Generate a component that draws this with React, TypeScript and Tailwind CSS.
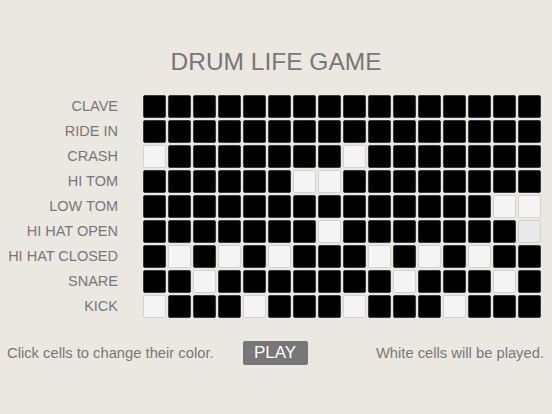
import { useState } from "react";

const LABELS = [
  "CLAVE",
  "RIDE IN",
  "CRASH",
  "HI TOM",
  "LOW TOM",
  "HI HAT OPEN",
  "HI HAT CLOSED",
  "SNARE",
  "KICK",
];

// 1 = white (will be played), 2 = white with hover tint
const INITIAL: number[][] = [
  [0, 0, 0, 0, 0, 0, 0, 0, 0, 0, 0, 0, 0, 0, 0, 0],
  [0, 0, 0, 0, 0, 0, 0, 0, 0, 0, 0, 0, 0, 0, 0, 0],
  [1, 0, 0, 0, 0, 0, 0, 0, 1, 0, 0, 0, 0, 0, 0, 0],
  [0, 0, 0, 0, 0, 0, 1, 1, 0, 0, 0, 0, 0, 0, 0, 0],
  [0, 0, 0, 0, 0, 0, 0, 0, 0, 0, 0, 0, 0, 0, 1, 1],
  [0, 0, 0, 0, 0, 0, 0, 1, 0, 0, 0, 0, 0, 0, 0, 2],
  [0, 1, 0, 1, 0, 1, 0, 0, 0, 1, 0, 1, 0, 1, 0, 0],
  [0, 0, 1, 0, 0, 0, 0, 0, 0, 0, 1, 0, 0, 0, 1, 0],
  [1, 0, 0, 0, 1, 0, 0, 0, 1, 0, 0, 0, 1, 0, 0, 0],
];

const App = () => {
  const [cells, setCells] = useState(INITIAL);

  const toggle = (r: number, c: number) =>
    setCells((prev) =>
      prev.map((row, ri) =>
        ri === r ? row.map((v, ci) => (ci === c ? (v ? 0 : 1) : v)) : row
      )
    );

  return (
    <div
      className="w-[552px] h-[414px] bg-[#ebe8e1] text-[#777777] flex flex-col overflow-hidden"
      style={{ fontFamily: '"Liberation Sans", Arial, sans-serif' }}
    >
      <h1 className="mt-[46px] text-center text-[24.5px] leading-[32px] font-normal">
        DRUM LIFE GAME
      </h1>

      <div className="mt-[17px] flex flex-col gap-[2px]">
        {LABELS.map((label, r) => (
          <div key={label} className="flex items-center h-[23px]">
            <span className="w-[118px] text-right text-[14.5px] leading-[23px] whitespace-nowrap">
              {label}
            </span>
            <div className="ml-[25px] flex gap-[2px]">
              {cells[r].map((v, c) => (
                <Cell key={c} value={v} onClick={() => toggle(r, c)} />
              ))}
            </div>
          </div>
        ))}
      </div>

      <div className="mt-[23px] flex items-center pl-[7px] pr-[8px] text-[14.75px]">
        <span>Click cells to change their color.</span>
        <button className="ml-[29px] w-[65px] h-[24px] bg-[#777777] text-white text-[17px] leading-[24px] rounded-[2px]">
          PLAY
        </button>
        <span className="ml-auto">White cells will be played.</span>
      </div>
    </div>
  );
};

export default App;

/*******************
 * Components
 */

const Cell = (props: { value: number; onClick: () => void }) => {
  if (props.value === 2)
    return (
      <div
        onClick={props.onClick}
        className="w-[23px] h-[23px] rounded-[2px] border border-[#d4d2cc] bg-[#e9e9e9]"
      />
    );
  return props.value ? (
    <div
      onClick={props.onClick}
      className="w-[23px] h-[23px] rounded-[2px] border border-[#d4d2cc] bg-[#f4f4f4]"
    />
  ) : (
    <div
      onClick={props.onClick}
      className="w-[23px] h-[23px] rounded-[2px] border border-[#3a3a3a] bg-black"
    />
  );
};
